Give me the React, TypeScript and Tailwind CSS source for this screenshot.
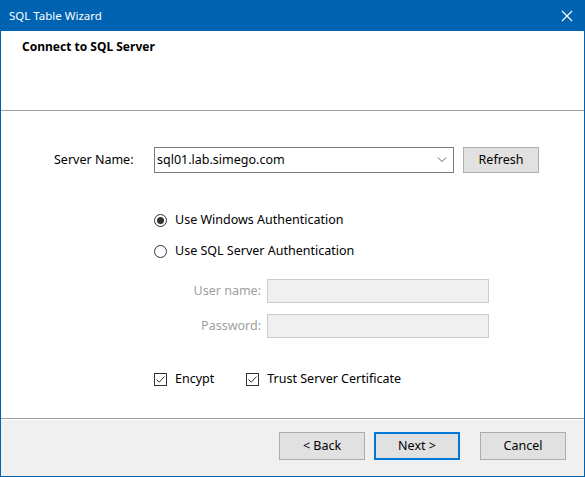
import React, { useState } from "react";

const FONT = { fontFamily: '"Noto Sans", "Segoe UI", Arial, sans-serif' };

function Radio({ checked, label, onClick }: { checked: boolean; label: string; onClick: () => void }) {
  return (
    <div className="flex items-center h-[20px] cursor-default" onClick={onClick}>
      <span className="w-[13px] h-[13px] rounded-full border border-[#333333] bg-white flex items-center justify-center shrink-0">
        {checked && <span className="w-[7px] h-[7px] rounded-full bg-[#333333]" />}
      </span>
      <span className="ml-[8px] text-[12.5px] leading-[16px] text-black">{label}</span>
    </div>
  );
}

function Check({ checked, label, onClick }: { checked: boolean; label: string; onClick: () => void }) {
  return (
    <div className="flex items-center h-[20px] cursor-default" onClick={onClick}>
      <span className="w-[13px] h-[13px] border border-[#333333] bg-white flex items-center justify-center shrink-0">
        {checked && (
          <svg width="11" height="11" viewBox="0 0 11 11">
            <path d="M1.5 5.5 L4.2 8.2 L9.5 2.5" fill="none" stroke="#333333" strokeWidth="1" />
          </svg>
        )}
      </span>
      <span className="ml-[8px] text-[12.5px] leading-[16px] text-black">{label}</span>
    </div>
  );
}

function Button({ children, primary }: { children: React.ReactNode; primary?: boolean }) {
  return (
    <button
      className={`w-[86px] h-[28px] bg-[#e1e1e1] text-[12.5px] text-black flex items-center justify-center ${
        primary ? "border-2 border-[#0078d7]" : "border border-[#adadad]"
      }`}
    >
      {children}
    </button>
  );
}

export default function App() {
  const [auth, setAuth] = useState("windows");
  const [encrypt, setEncrypt] = useState(true);
  const [trust, setTrust] = useState(true);
  const disabled = auth === "windows";

  return (
    <div className="w-[585px] h-[477px] bg-[#0063b1] flex flex-col px-px pb-px" style={FONT}>
      {/* Title bar */}
      <div className="h-[31px] shrink-0 flex items-center justify-between pl-[8px] pr-[11px] text-white">
        <span className="text-[11.5px]">SQL Table Wizard</span>
        <svg width="12" height="12" viewBox="0 0 12 12">
          <path d="M1 1 L11 11 M11 1 L1 11" stroke="white" strokeWidth="1.1" />
        </svg>
      </div>

      <div className="flex-1 flex flex-col bg-white">
        {/* Header */}
        <div className="h-[80px] shrink-0 border-b border-[#a0a0a0] pl-[21px] pt-[8px]">
          <div className="text-[12px] leading-[16px] font-bold text-black">Connect to SQL Server</div>
        </div>

        {/* Content */}
        <div className="flex-1 pl-[53px] pt-[36px]">
          <div className="flex items-center">
            <span className="w-[100px] text-[12.5px] text-black">Server Name:</span>
            <div className="w-[300px] h-[26px] border border-[#7a7a7a] flex items-center justify-between pl-[2px] pr-[6px]">
              <span className="text-[12.5px] text-black">sql01.lab.simego.com</span>
              <svg width="10" height="6" viewBox="0 0 10 6">
                <path d="M1 0.5 L5 4.5 L9 0.5" fill="none" stroke="#606060" strokeWidth="1" />
              </svg>
            </div>
            <button className="ml-[9px] w-[76px] h-[26px] bg-[#e1e1e1] border border-[#adadad] text-[12.5px] text-black">
              Refresh
            </button>
          </div>

          <div className="ml-[100px] mt-[37px] flex flex-col gap-[11px]">
            <Radio checked={auth === "windows"} label="Use Windows Authentication" onClick={() => setAuth("windows")} />
            <Radio checked={auth === "sql"} label="Use SQL Server Authentication" onClick={() => setAuth("sql")} />
          </div>

          <div className="ml-[100px] mt-[18px] flex flex-col gap-[11px]">
            <div className="flex items-center">
              <span className={`w-[113px] pr-[6px] text-right text-[12.5px] ${disabled ? "text-[#a0a0a0]" : "text-black"}`}>
                User name:
              </span>
              <div className={`w-[222px] h-[24px] border ${disabled ? "bg-[#f0f0f0] border-[#cccccc]" : "bg-white border-[#7a7a7a]"}`} />
            </div>
            <div className="flex items-center">
              <span className={`w-[113px] pr-[6px] text-right text-[12.5px] ${disabled ? "text-[#a0a0a0]" : "text-black"}`}>
                Password:
              </span>
              <div className={`w-[222px] h-[24px] border ${disabled ? "bg-[#f0f0f0] border-[#cccccc]" : "bg-white border-[#7a7a7a]"}`} />
            </div>
          </div>

          <div className="ml-[100px] mt-[31px] flex items-center gap-[32px]">
            <Check checked={encrypt} label="Encypt" onClick={() => setEncrypt(!encrypt)} />
            <Check checked={trust} label="Trust Server Certificate" onClick={() => setTrust(!trust)} />
          </div>
        </div>

        {/* Footer */}
        <div className="h-px bg-[#a0a0a0] shrink-0" />
        <div className="h-px bg-white shrink-0" />
        <div className="h-[56px] shrink-0 bg-[#f0f0f0] flex justify-end items-start pt-[12px] pr-[18px]">
          <Button>&lt; Back</Button>
          <div className="ml-[9px]">
            <Button primary>Next &gt;</Button>
          </div>
          <div className="ml-[20px]">
            <Button>Cancel</Button>
          </div>
        </div>
      </div>
    </div>
  );
}
